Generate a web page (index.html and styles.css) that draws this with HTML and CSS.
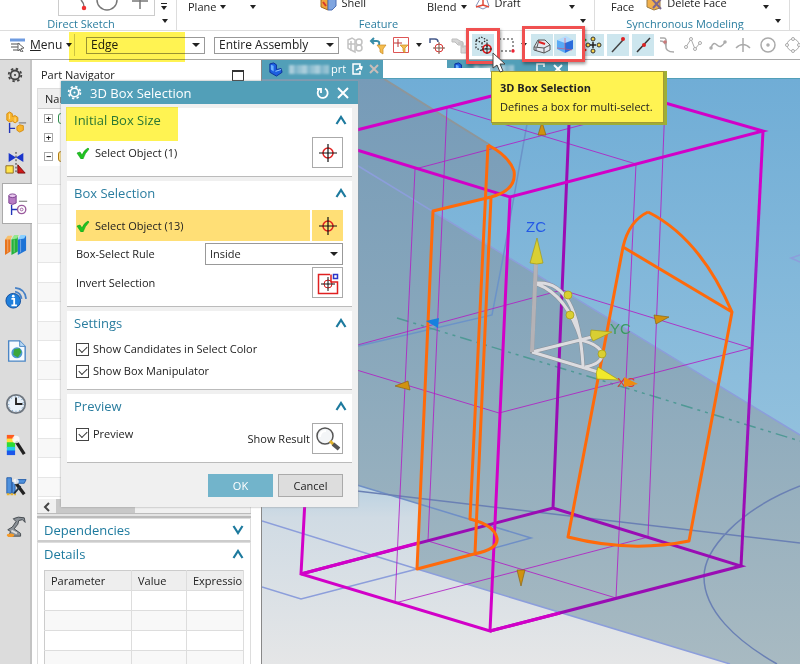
FILE: index.html
```html
<!DOCTYPE html>
<html lang="en">
<head>
    <meta charset="UTF-8">
    <meta name="viewport" content="width=device-width, initial-scale=1">
    <title>3D Box Selection</title>
    <link rel="stylesheet" href="styles.css">
</head>
<body>
    <!-- shared icons -->
    <svg class="defs" aria-hidden="true">
        <symbol id="target" viewBox="0 0 20 20">
            <circle cx="10" cy="10" r="5" fill="none" stroke="#e02020" stroke-width="1.5"/>
            <path d="M10 1v18M1 10h18" stroke="#111" stroke-width="1.2"/>
        </symbol>
        <symbol id="tick" viewBox="0 0 14 12">
            <path d="M1 6l3-1 2 3q2-5 6-7l1 1q-4 4-6 10H5z" fill="#1fc51f" stroke="#109a18" stroke-width=".6"/>
        </symbol>
        <symbol id="up" viewBox="0 0 12 10"><path d="M1.500 9L6 2l4.500 7" fill="none" stroke="#1d7a9e" stroke-width="2.200"/></symbol>
        <symbol id="down" viewBox="0 0 12 10"><path d="M1.500 1L6 8l4.500-7" fill="none" stroke="#1d7a9e" stroke-width="2.200"/></symbol>
        <symbol id="gear" viewBox="0 0 20 20">
            <circle cx="10" cy="10" r="5" fill="none" stroke="currentColor" stroke-width="2"/>
            <circle cx="10" cy="10" r="7" fill="none" stroke="currentColor" stroke-width="2" stroke-dasharray="2.700 2.800"/>
            <circle cx="10" cy="10" r="1.200" fill="currentColor"/>
        </symbol>
        <symbol id="part" viewBox="0 0 16 16">
            <path d="M2 2l4-1 3 2v5l5-1 1 4-6 4-7-4z" fill="#1c5fe0" stroke="#0b2f9a"/>
            <path d="M3 3l3 1v6l-3-2z" fill="#69b2ff"/><path d="M8 10l6-2" stroke="#9ad0ff"/>
        </symbol>
    </svg>

    <header class="ribbon">
        <section class="ribbon-group sketch-group">
            <div class="ribbon-tools">
                <div class="gallery">
                    <svg width="96" height="16" viewBox="58 0 96 16" fill="none" stroke="#777" stroke-width="1.500">
                        <path d="M80 0q3 3 3 7"/><circle cx="83" cy="8" r="1.500" fill="#e33" stroke="#e33"/>
                        <circle cx="106" cy="0" r="10"/><path d="M131 1h16M139 0v9"/>
                    </svg>
                </div>
                <button class="caret more" aria-label="More curves"></button>
            </div>
            <div class="group-label">Direct Sketch</div><button class="caret launcher" aria-label="Sketch options"></button>
        </section>
        <section class="ribbon-group feature-group">
            <div class="ribbon-tools">
                <button class="tool low">Plane<i class="caret"></i></button>
                <button class="caret low" aria-label="More"></button>
                <button class="tool shell"><svg width="17" height="16" viewBox="0 0 17 16"><path d="M1 5l7-3v13l-7-3z" fill="#f0a53a" stroke="#a56b1c"/><path d="M8 2h5l3-2v11l-4 4H8z" fill="#7fa5e0" stroke="#4c6fb5"/><path d="M3 7l3 4" stroke="#d63b2a" stroke-width="2"/></svg>Shell</button>
                <button class="tool low blend">Blend<i class="caret"></i></button>
                <button class="tool draft"><svg width="16" height="16" viewBox="0 0 16 16" fill="none"><path d="M6 2h5l3 9-6 3-7-3z" stroke="#8591b8"/><path d="M8 0v10M8 10l-7 2M8 10l6 2" stroke="#e04a3a" stroke-width="1.500"/></svg>Draft</button>
                <button class="caret low draft-more" aria-label="More features"></button>
            </div>
            <div class="group-label">Feature</div><button class="caret launcher" aria-label="Feature options"></button>
        </section>
        <section class="ribbon-group sync-group">
            <div class="ribbon-tools">
                <button class="tool low">Face</button>
                <button class="tool"><svg width="17" height="16" viewBox="0 0 17 16"><path d="M1 5l7-3 6 2v9l-6 2-7-3z" fill="#f1b04c" stroke="#9a7b45"/><path d="M6 4l9 10M15 4l-8 9" stroke="#7b6790" stroke-width="2"/></svg>Delete Face</button>
                <button class="caret low sync-more" aria-label="More faces"></button>
            </div>
            <div class="group-label">Synchronous Modeling</div><button class="caret launcher" aria-label="Synchronous options"></button>
        </section>
    </header>

    <nav class="toolbar">
        <button class="menu-button">
            <svg width="16" height="14" viewBox="0 0 16 14"><path d="M0 2h15" stroke="#6e9be0" stroke-width="3"/><path d="M1 6h9M1 9h8M3 12h7" stroke="#8a8a8a" stroke-width="1.500"/><path d="M8 5l6 5-3 .5 2 3-2 .5-1-3-2 2z" fill="#fff" stroke="#666"/></svg>
            <span><u>M</u>enu</span><i class="caret"></i>
        </button>
        <label class="combo edge-combo"><select aria-label="Type filter"><option>Edge</option></select></label>
        <label class="combo scope-combo"><select aria-label="Selection scope"><option>Entire Assembly</option></select></label>
        <div class="select-tools">
            <button class="icon-button" aria-label="Interpart"><svg viewBox="0 0 22 22" fill="none" stroke="#c2c2c2" stroke-width="1.500"><path d="M4 6l4-2 3 2v12l-4-2-3-2zM7 7v10M4 10h7"/><circle cx="15" cy="8" r="3"/><circle cx="15" cy="14" r="3"/></svg></button>
            <button class="icon-button" aria-label="Reset filters"><svg viewBox="0 0 22 22"><path d="M4 7h6q3 0 2 4M7 4L4 7l3 3" fill="none" stroke="#398da8" stroke-width="2"/><path d="M10 11h9l-3 4v5l-3-2v-3z" fill="#f5bd4e" stroke="#c98a22" stroke-width=".7"/></svg></button>
            <button class="icon-button" aria-label="Filter"><svg viewBox="0 0 22 22"><path d="M3.500 3.500h15v15h-15z" fill="#fff" stroke="#d55"/><path d="M8 5v8M4 9h8" stroke="#b33"/><path d="M10 11h8l-3 3v5l-2-2v-3z" fill="#f5bd4e" stroke="#c98a22" stroke-width=".7"/></svg></button>
            <button class="arrow-button" aria-label="Filter options"><i class="caret"></i></button>
            <button class="icon-button" aria-label="Snap view"><svg viewBox="0 0 22 22" fill="none"><path d="M4 9V5h5q3 0 3 3" stroke="#44598a" stroke-width="1.500"/><circle cx="13" cy="14" r="4" stroke="#d33"/><path d="M13 8v12M7 14h12" stroke="#754"/></svg></button>
            <button class="icon-button" aria-label="Hidden edges"><svg viewBox="0 0 22 22" fill="#d6d6d6" stroke="#bdbdbd"><path d="M3 5h5l3 2 3 1v3H9L6 8H3zM12 12h6v7h-6zM9 9h5v5"/></svg></button>
            <button class="icon-button on" aria-label="3D Box Selection"><svg viewBox="0 0 22 22" fill="none"><path d="M4 6l5-3 6 3v8l-5 3-6-3zM4 6l6 3 5-3M10 9v8" stroke="#222" stroke-width="1.200" stroke-dasharray="1.500 1.500"/><circle cx="15" cy="15" r="4" stroke="#df1717" stroke-width="1.700"/><path d="M15 10v10M10 15h10" stroke="#222"/></svg></button>
            <button class="icon-button" aria-label="Rectangle selection"><svg viewBox="0 0 22 22"><path d="M4 5h14v12H4z" fill="none" stroke="#333" stroke-dasharray="2 2"/><circle cx="18" cy="17" r="1.700" fill="#e23"/></svg></button>
            <button class="arrow-button" aria-label="Shape options"><i class="caret"></i></button>
            <button class="icon-button on" aria-label="Shaded with edges"><svg viewBox="0 0 22 22" stroke="#555"><path d="M3 13l4-7 7 0 5 5v5l-6 3-10-3z" fill="#e4e7ef"/><path d="M3 13l10 1 6-3M13 14v5M5 14v3M8 6l-2 7" fill="none"/><path d="M8 8l6 2" stroke="#d22" stroke-width="2"/></svg></button>
            <button class="icon-button on" aria-label="Shaded"><svg viewBox="0 0 22 22"><path d="M3 6l9-4 7 4-8 3z" fill="#b4dcff"/><path d="M3 6l8 3v10l-8-4z" fill="#5aaaf6"/><path d="M11 9l8-3v9l-8 4z" fill="#2a6cdc"/><path d="M11 4v11l-8-1M11 15l7 1" stroke="#e04b63" stroke-width=".6" fill="none"/></svg></button>
        </div>
        <div class="snap-tools">
            <button class="icon-button on" aria-label="Snap point"><svg viewBox="0 0 22 22"><path d="M1 3l4 3-4 3z" fill="#18a634"/><path d="M1 13l4 3-4 3z" fill="#d21"/><g fill="#f7d24a" stroke="#333"><circle cx="11" cy="5" r="2"/><circle cx="11" cy="17" r="2"/><circle cx="6" cy="11" r="2"/><circle cx="17" cy="11" r="2"/></g><path d="M11 8v6M8 11h6" stroke="#222" stroke-width="1.500"/></svg></button>
            <button class="icon-button on" aria-label="End point"><svg viewBox="0 0 22 22"><path d="M5 18L16 6" stroke="#444" stroke-width="1.500"/><circle cx="16" cy="5" r="2" fill="#d22"/></svg></button>
            <button class="icon-button on" aria-label="Mid point"><svg viewBox="0 0 22 22"><path d="M5 18L18 4" stroke="#333" stroke-width="1.500"/><circle cx="12" cy="11" r="2" fill="#d22"/></svg></button>
            <button class="icon-button" aria-label="Control point"><svg viewBox="0 0 22 22" fill="none" stroke="#aaa" stroke-width="1.500"><path d="M3 4h4q3 0 2 7t8 7M3 7q5 0 6 5"/><circle cx="8" cy="8" r="1" stroke="#c77"/></svg></button>
            <button class="icon-button" aria-label="Poles"><svg viewBox="0 0 22 22" fill="#fff" stroke="#aaa"><path d="M4 13l5-8 4 10 5-6" fill="none"/><circle cx="4" cy="13" r="1.500"/><circle cx="9" cy="5" r="1.500"/><circle cx="13" cy="15" r="1.500"/><circle cx="18" cy="9" r="1.500"/></svg></button>
            <button class="icon-button" aria-label="Curve point"><svg viewBox="0 0 22 22" fill="none" stroke="#aaa" stroke-width="1.500"><path d="M4 14q2-7 6-3t8-3"/><circle cx="4" cy="14" r="1"/><circle cx="18" cy="8" r="1"/></svg></button>
            <button class="icon-button" aria-label="Intersection"><svg viewBox="0 0 22 22" fill="none" stroke="#aaa" stroke-width="1.500"><path d="M4 14q7-7 14 0M11 4v14"/></svg></button>
            <button class="icon-button" aria-label="Arc center"><svg viewBox="0 0 22 22" fill="none" stroke="#aaa" stroke-width="1.500"><circle cx="11" cy="11" r="7"/><circle cx="11" cy="11" r="1"/></svg></button>
            <button class="icon-button" aria-label="Quadrant"><svg viewBox="0 0 22 22" fill="#fff" stroke="#aaa"><circle cx="11" cy="11" r="6"/><circle cx="11" cy="5" r="1.500"/><circle cx="5" cy="11" r="1.500"/><circle cx="11" cy="17" r="1.500"/><circle cx="17" cy="11" r="1.500"/></svg></button>
        </div>
    </nav>

    <main class="workspace">
        <aside class="rail">
            <button class="rail-gear" aria-label="Settings"><svg width="18" height="18"><use href="#gear"/></svg></button>
            <div class="rail-group">
                <button aria-label="Assembly Navigator"><svg viewBox="0 0 24 24"><path d="M2 3l3-2 3 2v3l3-1 3 2v4l-3 2-3-2-3 1-3-2z" fill="#f8b62d" stroke="#d78b0c"/><path d="M5 3v6M11 7v5" stroke="#ffe19a"/><path d="M5 13v11M5 19h6" stroke="#2234b8" stroke-width="1.500"/><path d="M15 13h8" stroke="#666"/><path d="M13 17l3-2 4 1v5l-4 2-3-2z" fill="#f8b62d" stroke="#d78b0c"/></svg></button>
                <button aria-label="Constraint Navigator"><svg viewBox="0 0 24 24"><path d="M4 1l8 5-8 5zM20 1l-8 5 8 5z" fill="#1a35cc"/><path d="M12 0v24" stroke="#222" stroke-dasharray="2 2"/><path d="M1 15h8v8H1z" fill="#ffe44a" stroke="#8c6b1f"/><path d="M14 14l8 9h-8z" fill="#d01818" stroke="#7a1010"/></svg></button>
                <button class="active" aria-label="Part Navigator"><svg viewBox="0 0 24 24"><path d="M2 3v8q4 3 8 0V3z" fill="#b77bc4" stroke="#7b3f8e"/><ellipse cx="6" cy="3" rx="4" ry="2" fill="#e8c7ee" stroke="#7b3f8e"/><path d="M13 9h9" stroke="#666"/><path d="M5 13v11M5 18h6" stroke="#2234b8" stroke-width="1.500"/><circle cx="16" cy="18" r="4.500" fill="#fff" stroke="#9a5a9d" stroke-width="1.500"/><circle cx="16" cy="18" r="1.500" fill="none" stroke="#9a5a9d"/></svg></button>
                <button aria-label="Reuse Library"><svg viewBox="0 0 24 24"><path d="M0 6l6-4v17l-6 4z" fill="#e8741c"/><path d="M0 6l3-4h5L6 6z" fill="#f7bf6c"/><path d="M7 6l7-4v17l-7 4z" fill="#23b23a"/><path d="M7 6l3-5h5l-2 4z" fill="#95e890"/><path d="M14 6l9-4v16l-9 5z" fill="#1d73d6"/><path d="M14 6l3-5h6l-2 4z" fill="#8bd0ff"/><path d="M3 6v14M10 6v14M17 6v14" stroke="#fff" stroke-opacity=".4"/></svg></button>
            </div>
            <div class="rail-group">
                <button aria-label="HD3D Tools"><svg viewBox="0 0 24 24"><circle cx="9" cy="15" r="8" fill="#1f7fdb" stroke="#0d4c9c"/><path d="M7 13h3v7M7 20h6" stroke="#fff" stroke-width="2" fill="none"/><circle cx="9" cy="10" r="1.500" fill="#fff"/><path d="M11 5q6 1 7 8M11 1q11 1 12 12" fill="none" stroke="#4681c6" stroke-width="2"/></svg></button>
            </div>
            <div class="rail-group">
                <button aria-label="Web Browser"><svg viewBox="0 0 24 24"><path d="M4 1h12l6 6v16H4z" fill="#f7fbff" stroke="#4b86c5" stroke-width="1.500"/><path d="M16 1v6h6" fill="#b9d9f5" stroke="#4b86c5"/><circle cx="13" cy="14" r="6" fill="#4b99d0"/><path d="M10 10l6-1 2 4-4 6-5-3z" fill="#3aa63c"/></svg></button>
            </div>
            <div class="rail-group">
                <button aria-label="History"><svg viewBox="0 0 24 24"><circle cx="12" cy="12" r="10" fill="#e8f1fa" stroke="#6f7780" stroke-width="2"/><circle cx="12" cy="12" r="8" fill="none" stroke="#4d7fae" stroke-dasharray="1 3"/><path d="M12 5v7h7" fill="none" stroke="#222" stroke-width="2"/></svg></button>
                <button aria-label="Visual Reporting"><svg viewBox="0 0 24 24"><path d="M2 1h8v5H2z" fill="#ff5b1f"/><path d="M2 5h8v5H2z" fill="#ffe03a"/><path d="M2 9h9v6H2z" fill="#2ddc33"/><path d="M2 14h9v5H2z" fill="#22cbe8"/><path d="M2 18h9v5H2z" fill="#1c57ea"/><path d="M12 8l9 14" stroke="#222" stroke-width="3.500"/><circle cx="12" cy="6" r="4" fill="#fff" fill-opacity=".8"/></svg></button>
                <button aria-label="Process Studio"><svg viewBox="0 0 24 24"><path d="M2 3h5v17H2zM8 8h3v12H8zM12 5h11l-2 4h-8z" fill="#4e91dd" stroke="#255da8"/><path d="M2 21h10" stroke="#e7b32e" stroke-width="2" stroke-dasharray="3 1"/><path d="M12 9l9 12" stroke="#222" stroke-width="3.500"/><path d="M10 20l7-8" stroke="#234" stroke-width="2"/><circle cx="12" cy="7" r="3" fill="#fff" fill-opacity=".8"/></svg></button>
                <button aria-label="Robot"><svg viewBox="0 0 24 24"><path d="M9 3q5-3 12-1l1 5-3-3-4 1-1 4-4 5 7 5v3H4l2-5-3-2 5-3 4-6z" fill="#8b9197" stroke="#41464b"/><ellipse cx="6" cy="21" rx="4" ry="2" fill="#f59a28"/><path d="M7 16l6 3" stroke="#ddd" stroke-width="2"/></svg></button>
            </div>
        </aside>

        <section class="navigator">
            <div class="nav-title">Part Navigator<button class="restore" aria-label="Maximize"></button></div>
            <div class="tree">
                <div class="tree-head">Name</div>
                <div class="tree-row"><b class="expander">+</b><i class="node-icon green"></i></div>
                <div class="tree-row"><b class="expander">+</b></div>
                <div class="tree-row"><b class="expander">−</b><i class="node-icon gold"></i></div>
                <div class="tree-fill"></div>
                <div class="scrollbar"><svg width="8" height="10" viewBox="0 0 8 10"><path d="M6 1L2 5l4 4" fill="none" stroke="#444" stroke-width="2"/></svg><i class="thumb"></i></div>
            </div>
            <div class="splitter"></div>
            <div class="nav-section">Dependencies<svg width="12" height="10"><use href="#down"/></svg></div>
            <div class="nav-section details">Details<svg width="12" height="10"><use href="#up"/></svg></div>
            <div class="table-box">
                <table>
                    <thead><tr><th class="col-param">Parameter</th><th class="col-value">Value</th><th>Expression</th></tr></thead>
                    <tbody>
                        <tr><td></td><td></td><td></td></tr>
                        <tr><td></td><td></td><td></td></tr>
                        <tr><td></td><td></td><td></td></tr>
                        <tr><td></td><td></td><td></td></tr>
                    </tbody>
                </table>
            </div>
        </section>

        <section class="graphics">
            <div class="doc-tabs">
                <div class="doc-tab"><svg width="15" height="15"><use href="#part"/></svg><i class="smudge"></i>prt
                    <svg width="11" height="12" viewBox="0 0 11 12" fill="none" stroke="#fff" stroke-width="1.500"><path d="M8 4V1H1v10h7V8M4 7l6-3M7 3l3 1-1 3"/></svg>
                    <svg class="tab-close" width="10" height="10" viewBox="0 0 10 10"><path d="M1 1l8 8M9 1L1 9" stroke="#c9bdb9" stroke-width="2"/></svg></div>
                <div class="doc-tab second"><svg width="15" height="15"><use href="#part"/></svg><i class="smudge"></i>
                    <svg width="11" height="12" viewBox="0 0 11 12" fill="none" stroke="#fff" stroke-width="1.500"><path d="M8 4V1H1v10h7V8"/></svg>
                    <svg class="tab-close" width="10" height="10" viewBox="0 0 10 10"><path d="M1 1l8 8M9 1L1 9" stroke="#fff" stroke-width="2"/></svg></div>
            </div>
            <svg class="model" viewBox="262 79 538 585" preserveAspectRatio="xMinYMin slice">
                <defs>
                    <linearGradient id="sky" x1="0" y1="0" x2="0" y2="1"><stop offset="0" stop-color="#70add6"/><stop offset=".6" stop-color="#91c0dd"/><stop offset=".75" stop-color="#d0dbe4"/><stop offset="1" stop-color="#e5e6e7"/></linearGradient>
                    <linearGradient id="face" x1="0" y1="0" x2="0" y2="1"><stop offset="0" stop-color="#769bb8"/><stop offset=".5" stop-color="#8ba9bc"/><stop offset="1" stop-color="#a8bac2"/></linearGradient>
                    <linearGradient id="rightEdge" x1="0" y1="0" x2="0" y2="1"><stop offset=".18" stop-color="#d200c8"/><stop offset=".22" stop-color="#a01fd0"/><stop offset="1" stop-color="#9a08b0"/></linearGradient>
                </defs>
                <rect x="262" y="79" width="538" height="585" fill="url(#sky)"/>
                <path d="M262 79H384L490 145Q513 158 515 172Q516 188 491 197L433 211L800 435V664H730L417 569L420 504L357 485L262 456Z" fill="url(#face)"/>
                <path d="M384 79L490 145" stroke="#8f9699" stroke-width="2"/>
                <!-- sketch curves lying under the box -->
                <g fill="none" stroke="#8c9edb" stroke-width="1.500">
                    <path d="M350 161L800 435M262 521L417 569L730 664M262 587L301 599L417 569M800 255l-9 3 9 4"/>
                    <path d="M357 485L531 538L417 569" stroke="#6f8fc6"/>
                    <path d="M527 124L503 258L492 315L350 348" stroke="#6b93c8"/>
                    <path d="M357 491L800 543M800 486C738 510 704 550 704 577C704 610 735 640 777 664" stroke="#6a80b4"/>
                    <path d="M397 318L800 441" stroke="#4f9995" stroke-dasharray="12 5 3 5 3 5"/>
                </g>
                <!-- mid planes -->
                <g fill="none" stroke="#b020c4" stroke-width="1" stroke-opacity=".85">
                    <path d="M350 347L562 290L751 348L499 413L350 368"/>
                    <path d="M447 107L428 541L616 598L636 164L447 107"/>
                    <path d="M415 169L395 603L648 537L665 103L415 169"/>
                </g>
                <!-- bounding box -->
                <g fill="none" stroke="#9a0cb4" stroke-width="3">
                    <path d="M571 76L553 508M490 631L741 566L553 508L301 574"/>
                    <path d="M763 131L741 566" stroke="url(#rightEdge)"/>
                    <path d="M321 139L571 76L763 131L510 197L321 139M510 197L490 631L301 574L305 500M490 631L560 613M301 574L418 543" stroke="#d200c8"/>
                </g>
                <g fill="none" stroke="#ff6a0a" stroke-width="3" stroke-linejoin="round">
                    <path d="M488 145Q509 156 514 171Q517 190 491 197L433 211L417 569L474 554Q499 549 497 538Q494 525 470 519L488 145M491 197L475 553"/>
                    <path d="M648 212Q700 238 732 312L689 541Q630 553 568 537L623 247Q629 221 648 212M623 247L732 312"/>
                </g>
                <!-- coordinate triad -->
                <path d="M532 352L536 263M532 352L592 337M532 352L598 372M537 283Q578 280 583 366M537 284Q567 295 581 340Q600 345 602 354Q602 364 585 367" fill="none" stroke="#8b9198" stroke-width="4" stroke-linecap="round"/>
                <path d="M532 352L592 337M532 352L598 372M537 283Q578 280 583 366M537 284Q567 295 581 340Q600 345 602 354Q602 364 585 367" fill="none" stroke="#dcdce0" stroke-width="3"/>
                <path d="M532 352L536 263" stroke="#b4b2b6" stroke-width="4"/>
                <g fill="#d9cf32" stroke="#a39918" stroke-width=".7">
                    <path d="M537 238l6 25q-6 2-13 0z"/><path d="M591 330l21 2-19 9q-4-5-2-11z"/><path d="M598 367l21 13-22-1q-2-6 1-12z" fill="#f2e92b"/>
                    <circle cx="568" cy="295" r="4"/><circle cx="570" cy="315" r="4"/><circle cx="602" cy="354" r="4"/>
                </g>
                <g fill="#d0920f" stroke="#8d6513" stroke-width=".7">
                    <path d="M542 122l4 13h-8z"/><path d="M395 386l13-5 2 9z"/><path d="M669 317l-15-2 2 9z"/><path d="M517 570h8l-4 16z"/>
                </g>
                <path d="M426 321l13-3-1 10z" fill="#1681df"/>
                <text class="axis z" x="526" y="232">ZC</text>
                <text class="axis y" x="610" y="334">YC</text>
                <text class="axis x" x="617" y="387">XC</text>
                <path d="M624 377l14 7-14 3z" fill="#ee8c10"/>
            </svg>
        </section>

        <form class="dialog">
            <div class="dialog-title"><svg width="17" height="17"><use href="#gear"/></svg><h1>3D Box Selection</h1>
                <button type="reset" aria-label="Reset"><svg width="14" height="14" viewBox="0 0 14 14"><path d="M3 3.500A5 5 0 1 0 9 2.500M1 3h4v4" fill="none" stroke="#fff" stroke-width="1.800"/></svg></button>
                <button type="button" aria-label="Close"><svg width="12" height="12" viewBox="0 0 12 12"><path d="M1 1l10 10M11 1L1 11" stroke="#fff" stroke-width="2"/></svg></button>
            </div>
            <section class="panel">
                <h2>Initial Box Size<svg width="12" height="10"><use href="#up"/></svg></h2>
                <div class="row"><div class="pick"><svg width="14" height="12"><use href="#tick"/></svg>Select Object (1)</div><button type="button" class="square" aria-label="Select initial object"><svg width="20" height="20"><use href="#target"/></svg></button></div>
            </section>
            <section class="panel">
                <h2>Box Selection<svg width="12" height="10"><use href="#up"/></svg></h2>
                <div class="row"><div class="pick current"><svg width="14" height="12"><use href="#tick"/></svg>Select Object (13)</div><button type="button" class="square current" aria-label="Select objects"><svg width="20" height="20"><use href="#target"/></svg></button></div>
                <div class="row rule"><label for="rule">Box-Select Rule</label><span class="combo"><select id="rule"><option>Inside</option></select></span></div>
                <div class="row"><label for="invert">Invert Selection</label><button type="button" id="invert" class="square"><svg width="24" height="24" viewBox="0 0 24 24"><path d="M14 3.500H2.500v19h19V11H15V3.500" fill="none" stroke="#e02020" stroke-width="1.500"/><circle cx="12" cy="13" r="4" fill="none" stroke="#e02020"/><path d="M12 6v14M5 13h14" stroke="#111"/><path d="M17.500 3.500h4v4h-4z" fill="#fff" stroke="#2b35c8" stroke-width="1.500"/></svg></button></div>
            </section>
            <section class="panel">
                <h2>Settings<svg width="12" height="10"><use href="#up"/></svg></h2>
                <div class="checks">
                    <label class="check"><input type="checkbox" checked>Show Candidates in Select Color</label>
                    <label class="check"><input type="checkbox" checked>Show Box Manipulator</label>
                </div>
            </section>
            <section class="panel">
                <h2>Preview<svg width="12" height="10"><use href="#up"/></svg></h2>
                <div class="row preview"><label class="check"><input type="checkbox" checked>Preview</label><label class="result" for="result">Show Result</label><button type="button" id="result" class="square"><svg width="26" height="26" viewBox="0 0 26 26"><circle cx="10" cy="10" r="8" fill="#f3f5f7" stroke="#555" stroke-width="1.500"/><path d="M5 11q0-6 6-6" fill="none" stroke="#fff" stroke-width="2"/><path d="M15 15l4 4" stroke="#e0b22a" stroke-width="3"/><path d="M18 18l6 5" stroke="#555" stroke-width="4"/></svg></button></div>
            </section>
            <div class="buttons"><button type="submit" class="ok">OK</button><button type="button" class="cancel">Cancel</button></div>
            <i class="marker size-marker"></i>
        </form>
    </main>

    <i class="marker edge-marker"></i>
    <i class="frame box-frame"></i>
    <i class="frame shade-frame"></i>
    <div class="tooltip" role="tooltip"><strong>3D Box Selection</strong><span>Defines a box for multi-select.</span></div>
    <svg class="cursor" width="14" height="21" viewBox="0 0 14 21"><path d="M1 1v15l4-3 3 7 3-1-3-7h5z" fill="#fff" stroke="#444"/></svg>
</body>
</html>
```
FILE: styles.css
```css
* {
    box-sizing: border-box;
}

body {
    margin: 0;
    height: 100vh;
    display: flex;
    flex-direction: column;
    position: relative;
    overflow: hidden;
    background-color: #fff;
    color: #222;
    font: 11px/16px "Open Sans", "Noto Sans", sans-serif;
}

button, select, input {
    font: inherit;
    color: inherit;
    margin: 0;
}

button {
    display: flex;
    align-items: center;
    padding: 0;
    border: none;
    background: none;
}

svg {
    display: block;
    flex: none;
}

.defs {
    position: absolute;
    width: 0;
    height: 0;
}

.caret::after {
    content: "";
    display: block;
    border: 3px solid transparent;
    border-top: 4px solid #222;
    border-bottom: none;
}

/* ribbon */
.ribbon {
    display: flex;
    flex: none;
    height: 31px;
    border-bottom: 1px solid #ddd;
    overflow: hidden;
}

.ribbon-group {
    position: relative;
    border-right: 1px solid #ddd;
}

.sketch-group {
    width: 177px;
}

.feature-group {
    width: 418px;
}

.sync-group {
    width: 195px;
}

.ribbon-tools {
    display: flex;
    align-items: flex-start;
    height: 16px;
}

.sketch-group .ribbon-tools {
    padding-left: 58px;
    gap: 6px;
}

.gallery {
    border: 1px solid #ccc;
    border-top: none;
    width: 97px;
    height: 16px;
    overflow: hidden;
}

.more {
    border-top: 1px solid #222;
    padding-top: 2px;
    margin-top: 3px;
}

.feature-group .ribbon-tools {
    padding-left: 11px;
}

.tool {
    gap: 4px;
    height: 16px;
    line-height: 16px;
    margin-top: -5px;
}

.low {
    margin-top: -1px;
}

.caret.low {
    margin-top: 5px;
    margin-left: 24px;
}

.shell {
    margin-left: 64px;
}

.blend {
    margin-left: 61px;
}

.draft {
    margin-left: 8px;
}

.feature-group .draft-more {
    margin-left: 48px;
}

.sync-group .ribbon-tools {
    padding-left: 16px;
    gap: 12px;
}

.group-label {
    padding-right: 14px;
    color: #2a7d9f;
    text-align: center;
    line-height: 15px;
}

.launcher {
    position: absolute;
    right: 8px;
    bottom: 7px;
}

/* selection bar */
.toolbar {
    display: flex;
    flex: none;
    align-items: center;
    height: 29px;
    padding-left: 10px;
    border-bottom: 1px solid #aaa;
    font-size: 12px;
}

.menu-button {
    gap: 4px;
    width: 65px;
    height: 22px;
    border-right: 1px solid #ccc;
}

.combo {
    position: relative;
    display: block;
}

.combo::after {
    content: "";
    position: absolute;
    right: 5px;
    top: 50%;
    margin-top: -2px;
    border: 4px solid transparent;
    border-top-color: #222;
    border-bottom: none;
    pointer-events: none;
}

.combo select {
    appearance: none;
    display: block;
    width: 100%;
    height: 17px;
    padding: 0 4px;
    line-height: 14px;
    border: 1px solid #999;
    border-radius: 0;
    background-color: #fff;
}

.edge-combo {
    width: 119px;
    margin-left: 11px;
}

.scope-combo {
    width: 125px;
    margin-left: 9px;
}

.select-tools {
    display: flex;
    gap: 1px;
    margin-left: 5px;
}

.snap-tools {
    display: flex;
    flex: 1;
    gap: 3px;
    margin-left: 6px;
    overflow: hidden;
}

.icon-button {
    flex: none;
    width: 22px;
    height: 22px;
}

.icon-button svg {
    width: 22px;
    height: 22px;
}

.icon-button.on {
    background-color: #cde6ee;
}

.arrow-button {
    justify-content: center;
    width: 12px;
    height: 22px;
}

/* resource bar */
.workspace {
    position: relative;
    display: flex;
    flex: 1;
    min-height: 0;
}

.rail {
    display: flex;
    flex-direction: column;
    flex: none;
    gap: 12px;
    width: 32px;
    background-color: #dcdcdc;
    border-right: 2px solid #c4c4c4;
}

.rail button {
    justify-content: center;
    width: 32px;
    height: 41px;
}

.rail .rail-gear {
    height: 29px;
    width: 30px;
    color: #444;
}

.rail-group svg {
    width: 22px;
    height: 22px;
}

.rail-group .active {
    background-color: #fff;
    border: 1px solid #aaa;
    border-right: none;
    margin-left: 2px;
    width: 30px;
}

/* part navigator */
.navigator {
    display: flex;
    flex-direction: column;
    flex: none;
    width: 230px;
    padding: 5px 10px 0 5px;
    border-right: 1px solid #888;
}

.nav-title {
    display: flex;
    align-items: center;
    justify-content: space-between;
    height: 20px;
    padding: 0 7px 0 4px;
}

.restore {
    width: 12px;
    height: 11px;
    border: 1px solid #333;
    border-top-width: 2px;
}

.tree {
    display: flex;
    flex-direction: column;
    height: 427px;
    margin-top: 3px;
    border: 1px solid #ddd;
}

.tree-head {
    height: 20px;
    padding: 2px 7px;
    background-color: #eee;
    border-bottom: 1px solid #ccc;
}

.tree-row {
    display: flex;
    align-items: center;
    gap: 5px;
    height: 19px;
    padding-left: 6px;
}

.expander {
    width: 9px;
    height: 9px;
    border: 1px solid #aaa;
    font-size: 9px;
    line-height: 7px;
    text-align: center;
}

.node-icon {
    width: 10px;
    height: 11px;
    border: 1px solid #2a8b4a;
    border-radius: 3px;
}

.node-icon.gold {
    border-color: #b07b12;
    background-color: #ffe08a;
}

.tree-fill {
    flex: 1;
    background: repeating-linear-gradient(#f8f8f8 0 18px, #e6e6e6 18px 19px, #fff 19px 38px, #e6e6e6 38px 39px);
}

.scrollbar {
    display: flex;
    align-items: center;
    height: 15px;
    padding-left: 5px;
    gap: 5px;
    background-color: #f0f0f0;
}

.thumb {
    width: 79px;
    height: 15px;
    background-color: #c8c8c8;
}

.splitter {
    height: 5px;
    margin-top: -2px;
    border-top: 1px solid #bbb;
    border-bottom: 2px solid #bbb;
    background-color: #e4e4e4;
}

.nav-section {
    display: flex;
    align-items: center;
    justify-content: space-between;
    height: 24px;
    padding: 0 6px 0 6px;
    border: 1px solid #ddd;
    border-bottom: 2px solid #ccc;
    color: #1d7a9e;
    font-size: 13px;
}

.nav-section.details {
    height: 23px;
    border-bottom: none;
}

.table-box {
    flex: 1;
    padding: 5px 6px 0 6px;
    border: 1px solid #ddd;
    border-top: none;
    border-bottom: none;
    overflow: hidden;
}

table {
    width: 100%;
    table-layout: fixed;
    border-collapse: collapse;
    border: 1px solid #ccc;
}

th, td {
    height: 20px;
    padding: 0 0 0 6px;
    border-right: 1px solid #ddd;
    border-bottom: 1px solid #ddd;
    font-weight: normal;
    text-align: left;
    overflow: hidden;
}

th {
    background-color: #eee;
    line-height: 19px;
}

tr:nth-child(even) td {
    background-color: #f8f8f8;
}

.col-param {
    width: 87px;
}

.col-value {
    width: 55px;
}

/* graphics window */
.graphics {
    display: flex;
    flex-direction: column;
    flex: 1;
    min-width: 0;
}

.doc-tabs {
    display: flex;
    flex: none;
    gap: 64px;
    height: 19px;
    border-bottom: 1px solid #529fb8;
}

.doc-tab {
    display: flex;
    align-items: center;
    gap: 6px;
    width: 121px;
    padding-left: 6px;
    background-color: #529fb8;
    color: #fff;
    white-space: nowrap;
}

.smudge {
    width: 40px;
    height: 9px;
    margin-right: -4px;
    background: repeating-linear-gradient(90deg, #a9cddb 0 5px, #7fb5ca 5px 9px, #94c1d2 9px 13px);
    filter: blur(1px);
}

.second {
    clip-path: polygon(0 0, 100% 0, 100% 12px, 43px 12px, 43px 8px, 0 8px);
}

.second .smudge {
    margin-right: 16px;
}

.model {
    flex: 1;
    width: 100%;
    min-height: 0;
}

.axis {
    font: 15px "Liberation Sans", Arial, sans-serif;
}

.axis.z {
    fill: #2459e6;
}

.axis.y {
    fill: #3b9b61;
}

.axis.x {
    fill: #dd3b35;
    font-size: 13px;
}

/* 3D box selection dialog */
.dialog {
    position: absolute;
    left: 61px;
    top: 21px;
    width: 297px;
    background-color: #f0f0f0;
    box-shadow: 0 0 2px #999;
}

.dialog-title {
    display: flex;
    align-items: center;
    height: 23px;
    padding: 0 9px 0 5px;
    gap: 7px;
    background-color: #529fb8;
    color: #fff;
}

.dialog-title h1 {
    flex: 1;
    margin: 0;
    font-size: 13px;
    font-weight: normal;
}

.panel {
    margin: 4px 6px 0 6px;
    padding: 0 9px 8px 9px;
    background-color: #fff;
    border-bottom: 1px solid #bbb;
}

.panel h2 {
    display: flex;
    align-items: center;
    justify-content: space-between;
    height: 24px;
    margin: 0 -4px 5px -2px;
    color: #2a7d9f;
    font-size: 13px;
    font-weight: normal;
}

.row {
    display: flex;
    align-items: center;
    justify-content: space-between;
    gap: 2px;
}

.pick {
    display: flex;
    flex: 1;
    align-items: center;
    gap: 5px;
    height: 31px;
}

.current {
    background-color: #ffdf76;
}

.square {
    justify-content: center;
    width: 31px;
    height: 31px;
    border: 1px solid #aaa;
}

.square.current {
    border-color: #ffdf76;
}

.rule {
    padding: 2px 0;
}

.rule .combo {
    width: 138px;
}

.rule select {
    height: 22px;
}

.checks {
    margin: -2px 0 -1px;
}

.check {
    display: flex;
    align-items: center;
    gap: 4px;
    height: 22px;
}

.check input {
    appearance: none;
    position: relative;
    width: 13px;
    height: 13px;
    border: 1px solid #444;
}

.check input:checked::after {
    content: "";
    position: absolute;
    left: 2px;
    top: 2px;
    width: 7px;
    height: 4px;
    border: solid #333;
    border-width: 0 0 1px 1px;
    transform: rotate(-45deg);
}

.preview .check {
    align-self: flex-start;
}

.result {
    margin-left: auto;
}

.buttons {
    display: flex;
    justify-content: flex-end;
    gap: 5px;
    padding: 11px 15px 10px;
}

.buttons button {
    justify-content: center;
    width: 65px;
    height: 23px;
    border: 1px solid #aaa;
    background-color: #ddd;
}

.buttons .ok {
    border-color: #72b4cb;
    background-color: #72b4cb;
    color: #fff;
}

/* highlights and call-outs */
.marker {
    position: absolute;
    background-color: #fff352;
    mix-blend-mode: multiply;
    pointer-events: none;
}

.edge-marker {
    left: 69px;
    top: 32px;
    width: 116px;
    height: 30px;
}

.size-marker {
    left: 5px;
    top: 26px;
    width: 112px;
    height: 34px;
}

.frame {
    position: absolute;
    border: 3px solid #f05050;
    box-shadow: 1px 2px 3px rgba(0, 0, 0, 0.4);
    pointer-events: none;
}

.box-frame {
    left: 466px;
    top: 28px;
    width: 34px;
    height: 36px;
}

.shade-frame {
    left: 522px;
    top: 26px;
    width: 63px;
    height: 36px;
}

.tooltip {
    position: absolute;
    left: 491px;
    top: 71px;
    display: flex;
    flex-direction: column;
    gap: 3px;
    width: 173px;
    padding: 8px 8px 7px;
    border: 1px solid #a39a35;
    background-color: #fff352;
    box-shadow: 2px 1px 0 1px #9fae35;
    white-space: nowrap;
}

.cursor {
    position: absolute;
    left: 492px;
    top: 52px;
}
```
